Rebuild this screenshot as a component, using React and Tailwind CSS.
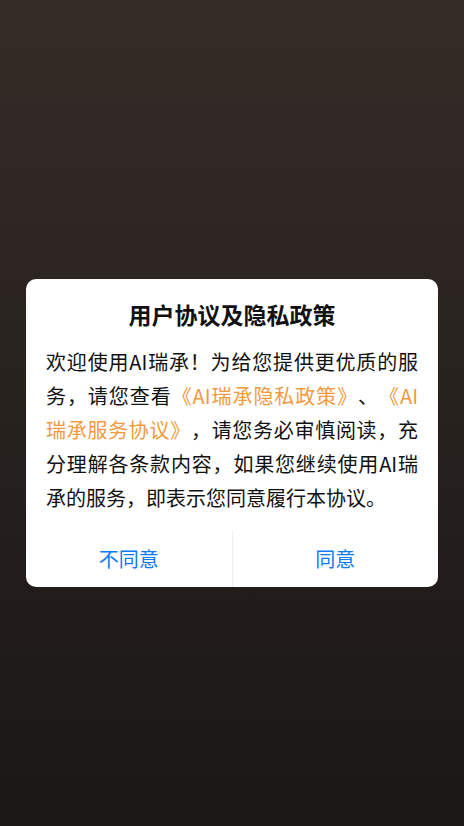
const App = () => {
    return (
        <div
            className="h-[826px] w-full bg-gradient-to-b from-[#352c27] to-[#1a1716] pt-[279px] px-[26px] [text-spacing-trim:space-all]"
            style={{ fontFamily: '"Noto Sans CJK SC", "Noto Sans", sans-serif' }}
        >
            <div className="bg-white rounded-[10px] overflow-hidden">
                <h1 className="pt-[23px] text-center text-[23px] leading-[24px] font-bold text-[#111]">
                    用户协议及隐私政策
                </h1>
                <p className="mt-[19px] px-[20px] text-[20px] leading-[34px] text-[#111] text-justify">
                    欢迎使用AI瑞承！为给您提供更优质的服务，请您查看
                    <span className="text-[#f39a3e]">《AI瑞承隐私政策》</span>
                    、
                    <span className="text-[#f39a3e]">《AI瑞承服务协议》</span>
                    ，请您务必审慎阅读，充分理解各条款内容，如果您继续使用AI瑞承的服务，即表示您同意履行本协议。
                </p>
                <div className="mt-[15px] flex h-[57px]">
                    <button className="flex-1 text-[20px] text-[#0a7af5]">不同意</button>
                    <div className="w-px bg-[#eeeeee]"></div>
                    <button className="flex-1 text-[20px] text-[#0a7af5]">同意</button>
                </div>
            </div>
        </div>
    );
};

export default App;
